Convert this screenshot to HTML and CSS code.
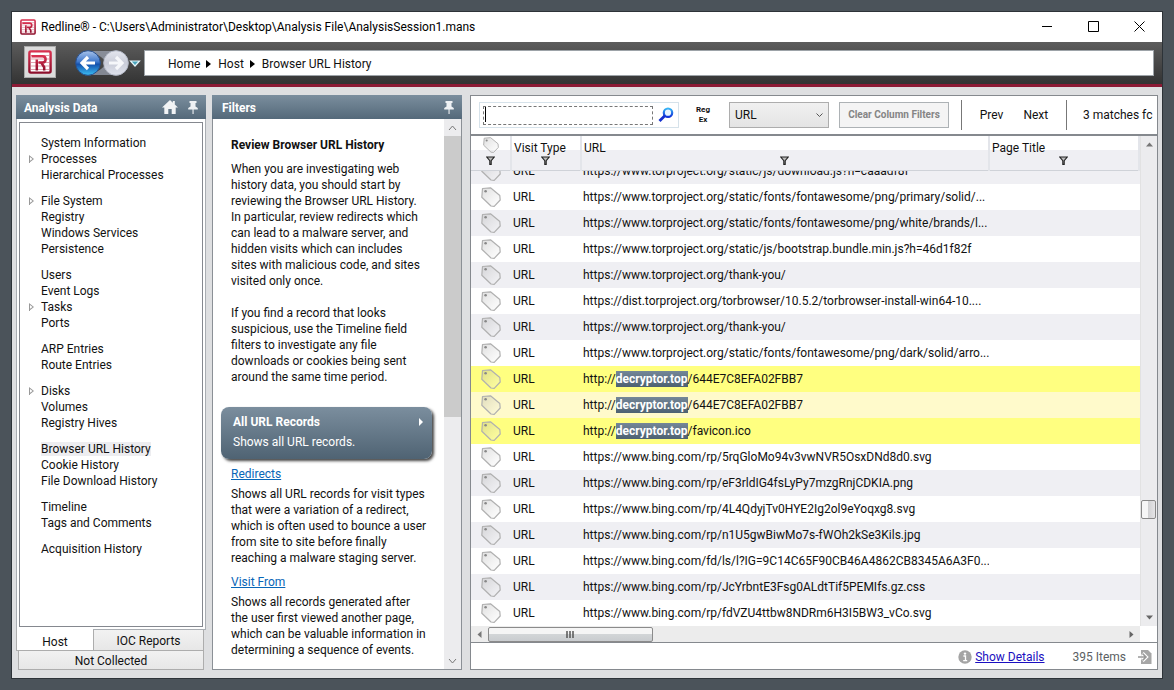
FILE: index.html
```html
<!DOCTYPE html>
<html lang="en">
<head>
<meta charset="utf-8">
<title>Redline® - AnalysisSession1.mans</title>
<link rel="stylesheet" href="styles.css">
</head>
<body>
<svg class="defs" aria-hidden="true">
  <defs>
    <linearGradient id="tagFill" x1="0" y1="0" x2="1" y2="1"><stop offset="0" stop-color="#999" stop-opacity=".32"/><stop offset="1" stop-color="#fff" stop-opacity=".25"/></linearGradient>
    <linearGradient id="red" x1="0" y1="0" x2="0" y2="1"><stop offset="0" stop-color="#d8304f"/><stop offset="1" stop-color="#8d0f2c"/></linearGradient>
    <linearGradient id="blue" x1="0" y1="0" x2="0" y2="1"><stop offset="0" stop-color="#a9c3ea"/><stop offset=".45" stop-color="#3f78cc"/><stop offset=".55" stop-color="#1350ad"/><stop offset="1" stop-color="#3cc0f5"/></linearGradient>
    <linearGradient id="pale" x1="0" y1="0" x2="0" y2="1"><stop offset="0" stop-color="#e4e6ee"/><stop offset=".5" stop-color="#c9ccd8"/><stop offset="1" stop-color="#dfe2ec"/></linearGradient>
    <linearGradient id="lens" x1="0" y1="0" x2="0" y2="1"><stop offset="0" stop-color="#35b4f5"/><stop offset="1" stop-color="#1030d8"/></linearGradient>
    <symbol id="tag" viewBox="0 0 20 20"><path d="M1.5 1.5 9.5.8 18.8 8.500 19.200 13 13.200 19.300 10 19 .8 10.200Z" fill="url(#tagFill)" stroke="#b0b0b0" stroke-width="1.200" stroke-linejoin="round"/><circle cx="4.600" cy="4.300" r="1.300" fill="#888"/></symbol>
    <symbol id="funnel" viewBox="0 0 9 9"><path d="M.8 1h7.400L5.200 4.600V8.400H3.800V4.600Z" fill="#bbb" stroke="#222" stroke-width="1.100"/></symbol>
    <symbol id="logo" viewBox="0 0 24 24"><rect x="1" y="1" width="22" height="22" rx="1.500" fill="#fff"/><path d="M3 5.500h18M3 9h18M3 12.500h18M3 16h18M3 19.500h18" stroke="#dfa2ae" stroke-width="1.200"/><rect x="1.400" y="1.400" width="21.200" height="21.200" rx="1.500" fill="none" stroke="url(#red)" stroke-width="2.400"/><path d="M3.500 6.200H14.500Q17.600 6.200 17.600 9.300T14.500 12.600H10.500M13.500 13 16.200 17.200V20.500M8.800 9.500V20.500" fill="none" stroke="url(#red)" stroke-width="2.500"/></symbol>
    <symbol id="pin" viewBox="0 0 10 13"><path d="M1.500 0h7v2h-1v3.400L9.800 7v1.400H.2V7l2.300-1.600V2h-1ZM4.500 8.400h1.100V13H4.500Z" fill="#eef1f4"/></symbol>
  </defs>
</svg>
<div class="window">
  <header class="titlebar">
    <svg class="app-icon"><use href="#logo"/></svg>
    <span class="caption">Redline® - C:\Users\Administrator\Desktop\Analysis File\AnalysisSession1.mans</span>
    <button class="win-btn" aria-label="Minimize"><svg width="11" height="11"><path d="M0 5.500h10" stroke="#000"/></svg></button>
    <button class="win-btn" aria-label="Maximize"><svg width="11" height="11"><path d="M.5.5h10v10H.5Z" fill="none" stroke="#000"/></svg></button>
    <button class="win-btn" aria-label="Close"><svg width="11" height="11"><path d="M.5.5l10 10M10.500.5l-10 10" stroke="#000"/></svg></button>
  </header>
  <nav class="navbar">
    <button class="logo-btn" aria-label="Redline menu"><svg width="24" height="24"><use href="#logo"/></svg></button>
    <svg class="history" width="66" height="28" viewBox="0 0 66 28">
      <path d="M14 2H41V26H14Q30 20 30 14T14 2Z" fill="#9ba1b0" opacity=".75"/>
      <circle cx="13" cy="14" r="12.300" fill="url(#blue)" stroke="#27508f"/>
      <path d="M13 8 7 14l6 6M8 14h12" fill="none" stroke="#fff" stroke-width="3.200"/>
      <circle cx="41" cy="14" r="12.300" fill="url(#pale)" stroke="#b5bac8"/>
      <path d="M41 8l6 6-6 6M46 14H34" fill="none" stroke="#f6f7fa" stroke-width="3.200"/>
      <path d="M55.500 12h9L60 17Z" fill="#4aa5bd" stroke="#e4f4f8" stroke-width="1.200"/>
    </svg>
    <div class="crumbs"><a href="#">Home</a><i class="crumb-arrow"></i><a href="#">Host</a><i class="crumb-arrow"></i><a href="#">Browser URL History</a></div>
  </nav>
  <main class="workspace">
    <section class="panel analysis">
      <h2 class="panel-head"><span>Analysis Data</span>
        <svg class="home" width="16" height="14" viewBox="0 0 16 14"><path d="M8 0 0 7.500h2.300V14h4V9h3.400v5h4V7.500H16L12.800 4.500V1h-2v1.700Z" fill="#f1f3f5"/></svg>
        <svg width="10" height="13"><use href="#pin"/></svg></h2>
      <div class="tree-frame">
        <div class="tree">
          <ul><li>System Information</li><li class="node">Processes</li><li>Hierarchical Processes</li></ul>
          <ul><li class="node">File System</li><li>Registry</li><li>Windows Services</li><li>Persistence</li></ul>
          <ul><li>Users</li><li>Event Logs</li><li class="node">Tasks</li><li>Ports</li></ul>
          <ul><li>ARP Entries</li><li>Route Entries</li></ul>
          <ul><li class="node">Disks</li><li>Volumes</li><li>Registry Hives</li></ul>
          <ul><li><span class="current">Browser URL History</span></li><li>Cookie History</li><li>File Download History</li></ul>
          <ul><li>Timeline</li><li>Tags and Comments</li></ul>
          <ul><li>Acquisition History</li></ul>
        </div>
      </div>
      <div class="tabs"><button class="tab active">Host</button><button class="tab">IOC Reports</button></div>
      <button class="tab wide">Not Collected</button>
    </section>
    <section class="panel filters">
      <h2 class="panel-head"><span>Filters</span><svg width="10" height="13"><use href="#pin"/></svg></h2>
      <div class="filter-body">
        <div class="filter-text">
          <h3>Review Browser URL History</h3>
          <p>When you are investigating web<br>history data, you should start by<br>reviewing the Browser URL History.<br>In particular, review redirects which<br>can lead to a malware server, and<br>hidden visits which can includes<br>sites with malicious code, and sites<br>visited only once.</p>
          <p>If you find a record that looks<br>suspicious, use the Timeline field<br>filters to investigate any file<br>downloads or cookies being sent<br>around the same time period.</p>
          <button class="card"><strong>All URL Records<i class="card-arrow"></i></strong><span>Shows all URL records.</span></button>
          <a class="filter-link" href="#">Redirects</a>
          <p class="about">Shows all URL records for visit types<br>that were a variation of a redirect,<br>which is often used to bounce a user<br>from site to site before finally<br>reaching a malware staging server.</p>
          <a class="filter-link" href="#">Visit From</a>
          <p class="about">Shows all records generated after<br>the user first viewed another page,<br>which can be valuable information in<br>determining a sequence of events.</p>
        </div>
        <div class="vbar flat">
          <button aria-label="Scroll up"><svg width="9" height="6"><path d="M1 5l3.500-4L8 5" fill="none" stroke="#777"/></svg></button>
          <div class="flat-thumb"></div>
          <button class="last" aria-label="Scroll down"><svg width="9" height="6"><path d="M1 1l3.500 4L8 1" fill="none" stroke="#777"/></svg></button>
        </div>
      </div>
    </section>
    <section class="panel records">
      <div class="tools">
        <div class="search"><input type="text" aria-label="Search"><span class="caret"></span>
          <button aria-label="Find"><svg width="16" height="16" viewBox="0 0 16 16"><circle cx="10" cy="5.700" r="4.200" fill="#e6f5ff" stroke="url(#lens)" stroke-width="2.200"/><path d="M6.800 8.800 1.500 14" stroke="#1430cf" stroke-width="2.800"/></svg></button></div>
        <button class="regex">Reg<br>Ex</button>
        <select aria-label="Column"><option>URL</option></select>
        <button class="clear" disabled>Clear Column Filters</button>
        <div class="steps"><button>Prev</button><button>Next</button></div>
        <span class="matches">3 matches fc</span>
      </div>
      <div class="grid">
        <div class="grid-main">
          <table class="head">
            <colgroup><col class="c-tag"><col class="c-type"><col class="c-url"><col class="c-title"></colgroup>
            <thead><tr>
              <th><svg class="head-tag"><use href="#tag"/></svg><svg class="funnel"><use href="#funnel"/></svg></th>
              <th><span>Visit Type</span><svg class="funnel"><use href="#funnel"/></svg></th>
              <th><span>URL</span><svg class="funnel"><use href="#funnel"/></svg></th>
              <th><span>Page Title</span><svg class="funnel"><use href="#funnel"/></svg></th>
            </tr></thead>
          </table>
          <div class="viewport">
            <table class="rows">
              <colgroup><col class="c-tag"><col class="c-type"><col class="c-url"><col class="c-title"></colgroup>
              <tbody>
                <tr><td><svg class="tag"><use href="#tag"/></svg></td><td>URL</td><td>https://www.torproject.org/static/js/download.js?h=caaadf8f</td><td></td></tr>
                <tr><td><svg class="tag"><use href="#tag"/></svg></td><td>URL</td><td>https://www.torproject.org/static/fonts/fontawesome/png/primary/solid/...</td><td></td></tr>
                <tr><td><svg class="tag"><use href="#tag"/></svg></td><td>URL</td><td>https://www.torproject.org/static/fonts/fontawesome/png/white/brands/l...</td><td></td></tr>
                <tr><td><svg class="tag"><use href="#tag"/></svg></td><td>URL</td><td>https://www.torproject.org/static/js/bootstrap.bundle.min.js?h=46d1f82f</td><td></td></tr>
                <tr><td><svg class="tag"><use href="#tag"/></svg></td><td>URL</td><td>https://www.torproject.org/thank-you/</td><td></td></tr>
                <tr><td><svg class="tag"><use href="#tag"/></svg></td><td>URL</td><td>https://dist.torproject.org/torbrowser/10.5.2/torbrowser-install-win64-10....</td><td></td></tr>
                <tr><td><svg class="tag"><use href="#tag"/></svg></td><td>URL</td><td>https://www.torproject.org/thank-you/</td><td></td></tr>
                <tr><td><svg class="tag"><use href="#tag"/></svg></td><td>URL</td><td>https://www.torproject.org/static/fonts/fontawesome/png/dark/solid/arro...</td><td></td></tr>
                <tr class="hit"><td><svg class="tag"><use href="#tag"/></svg></td><td>URL</td><td>http://<mark>decryptor.top</mark>/644E7C8EFA02FBB7</td><td></td></tr>
                <tr class="hit pale"><td><svg class="tag"><use href="#tag"/></svg></td><td>URL</td><td>http://<mark>decryptor.top</mark>/644E7C8EFA02FBB7</td><td></td></tr>
                <tr class="hit"><td><svg class="tag"><use href="#tag"/></svg></td><td>URL</td><td>http://<mark>decryptor.top</mark>/favicon.ico</td><td></td></tr>
                <tr><td><svg class="tag"><use href="#tag"/></svg></td><td>URL</td><td>https://www.bing.com/rp/5rqGloMo94v3vwNVR5OsxDNd8d0.svg</td><td></td></tr>
                <tr><td><svg class="tag"><use href="#tag"/></svg></td><td>URL</td><td>https://www.bing.com/rp/eF3rldIG4fsLyPy7mzgRnjCDKIA.png</td><td></td></tr>
                <tr><td><svg class="tag"><use href="#tag"/></svg></td><td>URL</td><td>https://www.bing.com/rp/4L4QdyjTv0HYE2Ig2ol9eYoqxg8.svg</td><td></td></tr>
                <tr><td><svg class="tag"><use href="#tag"/></svg></td><td>URL</td><td>https://www.bing.com/rp/n1U5gwBiwMo7s-fWOh2kSe3Kils.jpg</td><td></td></tr>
                <tr><td><svg class="tag"><use href="#tag"/></svg></td><td>URL</td><td>https://www.bing.com/fd/ls/l?IG=9C14C65F90CB46A4862CB8345A6A3F0...</td><td></td></tr>
                <tr><td><svg class="tag"><use href="#tag"/></svg></td><td>URL</td><td>https://www.bing.com/rp/JcYrbntE3Fsg0ALdtTif5PEMIfs.gz.css</td><td></td></tr>
                <tr><td><svg class="tag"><use href="#tag"/></svg></td><td>URL</td><td>https://www.bing.com/rp/fdVZU4ttbw8NDRm6H3I5BW3_vCo.svg</td><td></td></tr>
              </tbody>
            </table>
          </div>
        </div>
        <div class="vbar raised">
          <button aria-label="Scroll up"><svg width="7" height="5"><path d="M0 4.500h7L3.500.5Z" fill="#777"/></svg></button>
          <div class="raised-thumb"></div>
          <button class="last" aria-label="Scroll down"><svg width="7" height="5"><path d="M0 .5h7l-3.500 4Z" fill="#666"/></svg></button>
        </div>
      </div>
      <div class="hbar">
        <button aria-label="Scroll left"><svg width="5" height="7"><path d="M4.500 0v7L.5 3.500Z" fill="#777"/></svg></button>
        <div class="hthumb"><svg width="9" height="7"><path d="M1 0v7M4 0v7M7 0v7" stroke="#555" stroke-width="1.500"/></svg></div>
        <button class="last" aria-label="Scroll right"><svg width="5" height="7"><path d="M.5 0v7l4-3.500Z" fill="#666"/></svg></button>
      </div>
      <footer class="status">
        <svg width="14" height="14" viewBox="0 0 14 14"><circle cx="7" cy="7" r="6.700" fill="#a4a4a4"/><circle cx="7" cy="3.600" r="1.200" fill="#fff"/><path d="M5.400 6H7.500v4.500M5.200 10.700h4" fill="none" stroke="#fff" stroke-width="1.300"/></svg>
        <a href="#">Show Details</a>
        <span class="count">395 Items</span>
        <svg width="14" height="14" viewBox="0 0 14 14"><path d="M3 0h7l3.500 3.500V14H3Z" fill="#a6a6a6"/><path d="M0 7h7.500M4.500 3.200 8.300 7l-3.800 3.800" fill="none" stroke="#fff" stroke-width="3.400"/><path d="M0 7h7.500M4.500 3.500 8 7l-3.500 3.500" fill="none" stroke="#999" stroke-width="1.600"/></svg>
      </footer>
    </section>
  </main>
</div>
</body>
</html>
```
FILE: styles.css
```css
* { box-sizing: border-box; }
body { margin: 0; height: 100vh; padding: 12px; background: #4b535a; color: #111; font: 12px/16px Roboto, "Open Sans", sans-serif; white-space: nowrap; }
button, input, select { font: inherit; color: inherit; margin: 0; padding: 0; border: 0; background: none; border-radius: 0; }
ul, h2, h3, p { margin: 0; padding: 0; list-style: none; }
svg { display: block; flex: none; }
.defs { position: absolute; width: 0; height: 0; }

.window { display: flex; flex-direction: column; height: 100%; background: #dedfe1; box-shadow: 0 0 0 1px #2d3338; }
.titlebar { display: flex; align-items: center; height: 30px; background: #fff; padding-left: 8px; flex: none; }
.app-icon { width: 16px; height: 16px; }
.caption { flex: 1; padding-left: 5px; color: #000; }
.win-btn { display: flex; justify-content: center; width: 46px; height: 30px; align-items: center; padding-bottom: 2px; }

.navbar { display: flex; align-items: center; flex: none; height: 45px; padding: 0 8px 0 12px; background: linear-gradient(#5c5c5c, #333); border-bottom: 3px solid #8c1a35; }
.logo-btn { display: flex; align-items: center; justify-content: center; width: 32px; height: 32px; margin-bottom: 2px; background: #dcdcdc; border: 1px solid #aaa; }
.history { margin: 0 4px 0 19px; }
.crumbs { display: flex; align-items: center; flex: 1; height: 26px; margin-left: -1px; padding: 1px 0 0 23px; background: #fff; border: 1px solid #9da3a8; }
.crumbs a { color: #111; text-decoration: none; }
.crumb-arrow { margin: 0 7px 0 6px; border: 4px solid transparent; border-left: 5px solid #000; border-right: 0; }

.workspace { display: flex; flex: 1; min-height: 0; padding: 8px 4px 8px; }
.panel { display: flex; flex-direction: column; min-height: 0; }
.panel-head { display: flex; align-items: center; flex: none; height: 24px; padding: 0 8px; background: linear-gradient(#7b8e9e, #54697a); color: #fff; font-size: 12px; font-weight: 700; }
.panel-head span { flex: 1; padding-top: 2px; }
.home { margin-right: 10px; }

.analysis { width: 190px; margin-right: 6px; }
.tree-frame { flex: 1; min-height: 0; padding: 3px 2px 2px; background: #fff; border: 1px solid #a9adb2; border-width: 0 1px 1px; }
.tree { height: 100%; border: 1px solid #85888f; padding: 12px 0 0 21px; overflow: hidden; }
.tree ul { margin-bottom: 10px; }
.node::before { content: ""; float: left; width: 5px; height: 8px; margin: 4px 0 0 -12px; background: #999; clip-path: polygon(0 0, 100% 50%, 0 100%, 0 82%, 70% 50%, 20% 25%, 20% 100%, 0 100%); }
.current { background: #ededf0; }
.tabs { display: flex; height: 20px; padding-right: 2px; flex: none; }
.tab { flex: 1; border: 1px solid #adadad; border-top: 0; background: linear-gradient(#f2f2f2, #e7e7e7); height: 21px; padding-top: 2px; }
.tab.active { flex: none; width: 77px; height: 22px; margin-top: -1px; background: #fff; border-right: 0; padding-top: 4px; }
.tab.wide { flex: none; height: 20px; margin: 0 2px; }
.analysis .tabs { z-index: 1; }

.filters { width: 250px; margin-right: 8px; }
.filters .panel-head { padding-left: 10px; }
.filter-body { display: flex; flex: 1; min-height: 0; background: #fff; border: 1px solid #8b9096; border-top: 0; }
.filter-text { flex: 1; min-width: 0; overflow: hidden; padding: 18px 12px 0 8px; }
.filter-text h3 { margin: 0 0 8px 10px; font-size: 12px; font-weight: 700; }
.filter-text p { margin: 0 0 16px 10px; }
.card { display: flex; flex-direction: column; width: 100%; height: 52px; margin-top: 22px; padding: 7px 9px 0 12px; gap: 4px; text-align: left; color: #fff; background: linear-gradient(#7b8e9e, #4f6373); border-radius: 8px; box-shadow: 2px 2px 3px #444; }
.card strong { display: flex; align-items: center; justify-content: space-between; width: 100%; }
.card-arrow { border: 4px solid transparent; border-left: 4px solid #fff; border-right: 0; }
.filter-link { display: block; margin: 7px 0 4px 10px; color: #0866b8; }
.filter-text .about { margin-bottom: 8px; }
.about + .filter-link { margin-top: 0; }

.vbar { display: flex; flex-direction: column; flex: none; width: 17px; background: #ececee; }
.vbar button { display: flex; align-items: center; justify-content: center; height: 17px; flex: none; }
.vbar .last { margin-top: auto; }
.flat-thumb { height: 51%; background: #cbcbcb; }

.records { flex: 1; min-width: 0; background: #fff; border: 1px solid #85898e; }
.tools { display: flex; align-items: center; flex: none; height: 40px; padding: 0 2px 0 8px; border-bottom: 2px solid #85898e; overflow: hidden; }
.search { position: relative; display: flex; align-items: center; width: 200px; height: 26px; padding-left: 3px; border: 1px solid #d6e2ea; }
.search input { width: 170px; height: 19px; border: 1px dashed #777; outline: 0; }
.caret { position: absolute; left: 5px; top: 4px; width: 1px; height: 15px; background: #000; }
.search button { margin-left: 5px; }
.regex { width: 48px; font-size: 8px; line-height: 10px; font-weight: 700; }
.tools select { appearance: none; width: 100px; height: 26px; margin-left: 2px; padding-left: 5px; border: 1px solid #adadad; background: url("data:image/svg+xml,%3Csvg xmlns='http://www.w3.org/2000/svg' width='7' height='5'%3E%3Cpath d='M.5.5l3 3 3-3' fill='none' stroke='%23555'/%3E%3C/svg%3E") no-repeat right 5px center, linear-gradient(#f0f0f0, #e4e4e4); }
.clear { width: 110px; height: 26px; margin: 0 12px 0 10px; border: 1px solid #adb2b5; background: #f4f4f4; color: #858585; font-size: 10px; font-weight: 700; }
.steps { display: flex; justify-content: center; gap: 20px; width: 106px; height: 30px; border: 1px solid #777; border-width: 0 1px; }
.matches { flex: 1; min-width: 0; padding-left: 16px; overflow: hidden; }

.grid { display: flex; flex: 1; min-height: 0; }
.grid-main { display: flex; flex-direction: column; flex: 1; min-width: 0; }
table { width: 100%; border-collapse: collapse; table-layout: fixed; }
.c-tag { width: 40px; }
.c-type { width: 70px; }
.c-url { width: 408px; }
.head { flex: none; height: 34px; background: linear-gradient(#fff 14px, #efeff3 14px); }
th { height: 34px; padding: 4px 4px 0 2px; border-right: 2px solid #e3e5ea; border-bottom: 1px solid #cfd2d8; font-weight: 400; text-align: left; vertical-align: top; }
th span { display: block; height: 16px; }
th:first-child { padding-right: 2px; }
.funnel { width: 9px; height: 9px; margin: 0 auto; }
.head-tag { width: 16px; height: 16px; margin: -3px auto 3px; }
.viewport { display: flex; flex: 1; flex-direction: column; justify-content: flex-end; min-height: 0; overflow: hidden; }
.rows tr { height: 26px; background: #fff; }
.rows tr:nth-child(odd) { background: #efeff3; }
.rows tr.hit { background: #ffff80; }
.rows tr.pale { background: #fffacb; }
td { padding: 0 0 0 2px; overflow: hidden; color: #111; }
.rows td:first-child { padding: 0; }
.tag { width: 20px; height: 20px; margin: 0 auto; }
mark { display: inline-block; background: linear-gradient(#748798, #4d6171); color: #fff; font-weight: 700; }
.raised { border-left: 1px solid #e2e2e2; }
.raised-thumb { width: 15px; height: 19px; margin-top: 347px; border: 1px solid #888; border-radius: 2px; background: linear-gradient(90deg, #f6f6f6 48%, #d2d2d4 50%, #e4e4e6); }
.hbar { display: flex; align-items: center; flex: none; height: 17px; border-bottom: 1px solid #85898e; background: linear-gradient(#ececec, #ececec) no-repeat 0 0 / calc(100% - 17px) 100%; padding-right: 17px; }
.hbar button { display: flex; align-items: center; justify-content: center; width: 17px; height: 16px; }
.hbar .last { margin-left: auto; }
.hthumb { display: flex; align-items: center; justify-content: center; width: 165px; height: 15px; border: 1px solid #8b8b8b; border-radius: 2px; background: linear-gradient(#f5f5f5 45%, #d2d5d7 50%, #c9cccf); }
.status { display: flex; align-items: center; justify-content: flex-end; flex: none; height: 26px; padding: 2px 5px 0 0; }
.status a { margin: 0 28px 0 3px; color: #1a0fc0; }
.count { margin-right: 12px; color: #5b5f63; }
```
